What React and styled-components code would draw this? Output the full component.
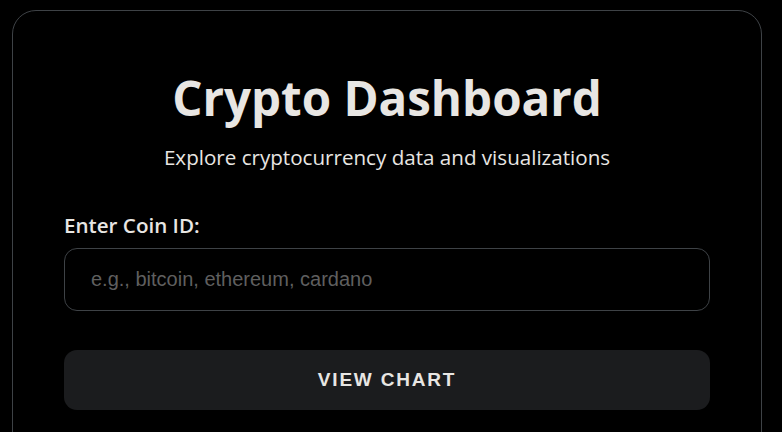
import React, { useState } from 'react'
import styled, { createGlobalStyle } from 'styled-components'

const GlobalStyle = createGlobalStyle`
    * {
        box-sizing: border-box;
    }
    html, body {
        margin: 0;
        padding: 0;
        background: #000;
        color: #e8e6e3;
        font-family: 'Open Sans', 'Noto Sans', sans-serif;
    }
`

const Page = styled.div`
    min-height: 432px;
    padding: 10px 20px 0 12px;
    background: #000;
`

const Card = styled.div`
    border: 1px solid #3e4246;
    border-radius: 24px;
    padding: 56px 51px 40px;
    min-height: 460px;
    display: flex;
    flex-direction: column;
`

const Title = styled.h1`
    margin: 0;
    text-align: center;
    font-size: 47.5px;
    font-weight: 700;
    line-height: 62px;
    color: #e8e6e3;
`

const Subtitle = styled.p`
    margin: 14px 0 0;
    text-align: center;
    font-size: 20.6px;
    line-height: 28px;
    color: #e8e6e3;
`

const Field = styled.div`
    margin-top: 40px;
    display: flex;
    flex-direction: column;
    gap: 9px;
`

const Label = styled.label`
    font-size: 20.6px;
    font-weight: 600;
    line-height: 28px;
`

const Input = styled.input`
    height: 63px;
    width: 100%;
    padding: 0 26px;
    background: #000;
    border: 1px solid #3e4246;
    border-radius: 13px;
    color: #e8e6e3;
    font-family: 'Liberation Sans', Arial, sans-serif;
    font-size: 20px;
    outline: none;
    &::placeholder {
        color: #5f5f5f;
    }
`

const Button = styled.button`
    margin-top: 39px;
    height: 60px;
    width: 100%;
    border: none;
    border-radius: 13px;
    background: #1b1c1e;
    color: #e8e6e3;
    font-family: 'Liberation Sans', Arial, sans-serif;
    font-size: 19px;
    font-weight: 700;
    letter-spacing: 1.8px;
    text-transform: uppercase;
    cursor: pointer;
`

const App = () => {
    const [coin, setCoin] = useState('')

    return (
        <React.Fragment>
            <GlobalStyle />
            <Page>
                <Card>
                    <Title>Crypto Dashboard</Title>
                    <Subtitle>Explore cryptocurrency data and visualizations</Subtitle>
                    <Field>
                        <Label htmlFor='coin'>Enter Coin ID:</Label>
                        <Input
                            id='coin'
                            value={coin}
                            onChange={e => setCoin(e.target.value)}
                            placeholder='e.g., bitcoin, ethereum, cardano'
                        />
                    </Field>
                    <Button>View Chart</Button>
                </Card>
            </Page>
        </React.Fragment>
    )
}

export default App
